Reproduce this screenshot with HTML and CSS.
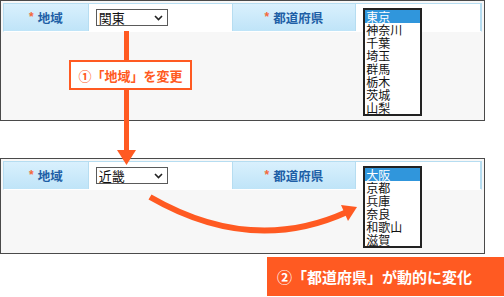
FILE: index.html
```html
<!DOCTYPE html>
<html lang="ja">
<head>
    <meta charset="UTF-8">
    <meta name="viewport" content="width=device-width, initial-scale=1.0">
    <title>地域と都道府県の連動</title>
    <link rel="stylesheet" href="styles.css">
</head>
<body>
    <div class="stage">
        <!-- before: 関東 -->
        <div class="panel panel-before">
            <div class="row">
                <div class="cell label region"><span class="req">*</span>地域</div>
                <div class="cell value region-value">
                    <div class="select">関東
                        <svg class="chev" width="9" height="6" viewBox="0 0 9 6"><path d="M1 1 L4.5 4.5 L8 1" fill="none" stroke="#222" stroke-width="1.6"/></svg>
                    </div>
                </div>
                <div class="cell label pref"><span class="req">*</span>都道府県</div>
                <div class="cell value pref-value">
                    <ul class="listbox">
                        <li class="selected">東京</li>
                        <li>神奈川</li>
                        <li>千葉</li>
                        <li>埼玉</li>
                        <li>群馬</li>
                        <li>栃木</li>
                        <li>茨城</li>
                        <li>山梨</li>
                    </ul>
                </div>
            </div>
        </div>

        <!-- after: 近畿 -->
        <div class="panel panel-after">
            <div class="row">
                <div class="cell label region"><span class="req">*</span>地域</div>
                <div class="cell value region-value">
                    <div class="select">近畿
                        <svg class="chev" width="9" height="6" viewBox="0 0 9 6"><path d="M1 1 L4.5 4.5 L8 1" fill="none" stroke="#222" stroke-width="1.6"/></svg>
                    </div>
                </div>
                <div class="cell label pref"><span class="req">*</span>都道府県</div>
                <div class="cell value pref-value">
                    <ul class="listbox">
                        <li class="selected">大阪</li>
                        <li>京都</li>
                        <li>兵庫</li>
                        <li>奈良</li>
                        <li>和歌山</li>
                        <li>滋賀</li>
                    </ul>
                </div>
            </div>
        </div>

        <svg class="arrows" width="504" height="297" viewBox="0 0 504 297">
            <line x1="126.5" y1="31" x2="126.5" y2="152" stroke="#ff5a22" stroke-width="5"/>
            <polygon points="117,150 136,150 126.5,165" fill="#ff5a22"/>
            <path d="M150 197 Q251.5 255.5 347 212" fill="none" stroke="#ff5a22" stroke-width="6"/>
            <polygon points="357,207 341,205 348,221" fill="#ff5a22"/>
        </svg>

        <div class="note note-change">①「地域」を変更</div>
        <div class="note note-result">②「都道府県」が動的に変化</div>
    </div>
</body>
</html>
```

FILE: styles.css
```css
body {
    margin: 0;
    background-color: #ffffff;
    font-family: 'Noto Sans CJK JP', 'Liberation Sans', sans-serif;
}

.stage {
    position: relative;
    width: 504px;
    height: 297px;
    overflow: hidden;
}

.panel {
    width: 485px;
    box-sizing: border-box;
    border: 1px solid #4a4a4a;
    background-color: #f7f7f7;
    padding: 2px 2px 0 2px;
}

.panel-before {
    height: 121px;
}

.panel-after {
    margin-top: 37px;
    height: 96px;
}

.row {
    display: flex;
    height: 29px;
    border: 1px solid #b6ddf1;
    border-bottom-color: #ffffff;
    box-sizing: border-box;
}

.cell {
    display: flex;
    align-items: center;
    box-sizing: border-box;
}

.label {
    justify-content: center;
    background: linear-gradient(#d9f0fd, #bfe4f8);
    color: #1e5fa6;
    font-weight: bold;
    font-size: 12.5px;
}

.label.region {
    width: 84px;
}

.label.pref {
    width: 124px;
    border-left: 1px solid #b6ddf1;
}

.req {
    color: #f4693a;
    font-family: 'Liberation Sans', sans-serif;
    font-size: 12px;
    margin-right: 4px;
    margin-top: -2px;
}

.value {
    background-color: #ffffff;
    border-left: 1px solid #b6ddf1;
}

.region-value {
    width: 144px;
    padding-left: 7px;
}

.pref-value {
    position: relative;
    width: 126px;
    border-right: 1px solid #b6ddf1;
}

.select {
    display: flex;
    align-items: center;
    justify-content: space-between;
    width: 72px;
    height: 17px;
    box-sizing: border-box;
    border: 1px solid #5a5a5a;
    padding: 0 4px 0 2px;
    font-size: 13px;
    line-height: 15px;
    color: #111;
    background-color: #fff;
}

.listbox {
    position: absolute;
    top: 4px;
    left: 7px;
    width: 59px;
    margin: 0;
    padding: 0;
    list-style: none;
    box-sizing: border-box;
    border: 2px solid #222;
    background-color: #fff;
    z-index: 1;
}

.listbox li {
    height: 13px;
    font-size: 12px;
    line-height: 13px;
    color: #111;
    padding-left: 1px;
    white-space: nowrap;
}

.listbox li.selected {
    background-color: #3096dc;
    color: #ffffff;
}

.arrows {
    position: absolute;
    left: 0;
    top: 0;
    z-index: 2;
}

.note {
    position: absolute;
    z-index: 3;
    display: flex;
    align-items: center;
    box-sizing: border-box;
    font-weight: bold;
    white-space: nowrap;
}

.note-change {
    left: 69px;
    top: 60px;
    width: 123px;
    height: 30px;
    justify-content: center;
    background-color: #ffffff;
    border: 2px solid #ff5a22;
    color: #ff5a22;
    font-size: 13px;
}

.note-result {
    left: 267px;
    top: 257px;
    width: 237px;
    height: 39px;
    padding-left: 10px;
    background-color: #ff5a22;
    color: #ffffff;
    font-size: 15px;
}
```
